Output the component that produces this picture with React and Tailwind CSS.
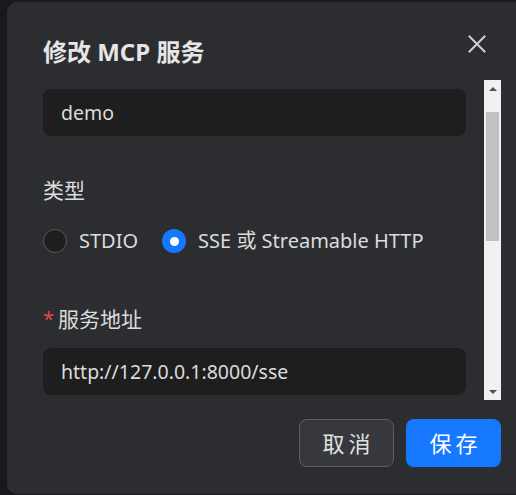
import { useState } from "react";

const FONT = { fontFamily: '"Noto Sans", "Noto Sans CJK SC", sans-serif' };

function Radio({ checked, label, onClick }) {
  return (
    <label className="flex items-center gap-3 cursor-pointer" onClick={onClick}>
      {checked ? (
        <span className="flex h-6 w-6 items-center justify-center rounded-full bg-[#1677ff]">
          <span className="h-[9px] w-[9px] rounded-full bg-white" />
        </span>
      ) : (
        <span className="h-6 w-6 rounded-full border border-[#5c5c5c] bg-[#1e1e1e]" />
      )}
      <span className="text-[20px] leading-6 text-[#dcdcdc]">{label}</span>
    </label>
  );
}

function FakeScrollbar() {
  return (
    <div className="flex w-[17px] shrink-0 flex-col bg-[#f1f1f1]">
      <div className="flex h-[17px] items-center justify-center">
        <span className="h-0 w-0 border-x-[4px] border-b-[4px] border-x-transparent border-b-[#505050]" />
      </div>
      <div className="flex-1 px-[2px] pt-[15px]">
        <div className="h-[129px] w-full bg-[#c1c1c1]" />
      </div>
      <div className="flex h-[17px] items-center justify-center">
        <span className="h-0 w-0 border-x-[4px] border-t-[4px] border-x-transparent border-t-[#505050]" />
      </div>
    </div>
  );
}

export default function App() {
  const [type, setType] = useState("sse");

  return (
    <div
      className="h-[495px] w-[516px] overflow-hidden bg-[#18191b] pl-[7px] pt-[2px]"
      style={FONT}
    >
      <div className="h-[492px] w-[530px] rounded-[10px] bg-[#2c2d31] pl-9 pt-[34px]">
        <div className="w-[458px]">
          <div className="flex items-start justify-between">
            <h1 className="text-[24px] font-bold leading-8 text-[#e6e6e6]">
              修改 MCP 服务
            </h1>
            <button className="-mt-px mr-[15px] h-[18px] w-[18px] text-[#cfcfcf]">
              <svg viewBox="0 0 18 18" width="18" height="18" fill="none" stroke="currentColor" strokeWidth="2" strokeLinecap="square">
                <path d="M1.5 1.5 16.5 16.5M16.5 1.5 1.5 16.5" />
              </svg>
            </button>
          </div>

          <div className="mt-3 flex h-[320px]">
            <div className="flex-1 overflow-hidden pr-[18px] pt-[9px]">
              <div className="flex h-[47px] items-center rounded-lg bg-[#1e1e1e] px-[18px] text-[19.5px] text-[#dcdcdc]">
                demo
              </div>

              <div className="mt-[39px] text-[21px] leading-[30px] text-[#dcdcdc]">
                类型
              </div>

              <div className="mt-6 flex items-center gap-6">
                <Radio
                  checked={type === "stdio"}
                  label="STDIO"
                  onClick={() => setType("stdio")}
                />
                <Radio
                  checked={type === "sse"}
                  label="SSE 或 Streamable HTTP"
                  onClick={() => setType("sse")}
                />
              </div>

              <div className="mt-[51px] flex items-center gap-1 text-[21px] leading-[30px] text-[#dcdcdc]">
                <span className="text-[20px] text-[#e5484d]">*</span>
                服务地址
              </div>

              <div className="mt-[14px] flex h-[47px] items-center rounded-lg bg-[#1e1e1e] px-[18px] text-[19.5px] text-[#dcdcdc]">
                http://127.0.0.1:8000/sse
              </div>
            </div>
            <FakeScrollbar />
          </div>

          <div className="mt-[19px] flex justify-end gap-3">
            <button className="h-12 w-[95px] rounded-lg border border-[#5e5f64] bg-[#37383d] text-[22px] text-[#e0e0e0]">
              <span className="mr-[-0.18em] tracking-[0.18em]">取消</span>
            </button>
            <button className="h-12 w-[95px] rounded-lg bg-[#1677ff] text-[22px] text-white shadow-[0_2px_0_rgba(5,95,255,0.1)]">
              <span className="mr-[-0.18em] tracking-[0.18em]">保存</span>
            </button>
          </div>
        </div>
      </div>
    </div>
  );
}
